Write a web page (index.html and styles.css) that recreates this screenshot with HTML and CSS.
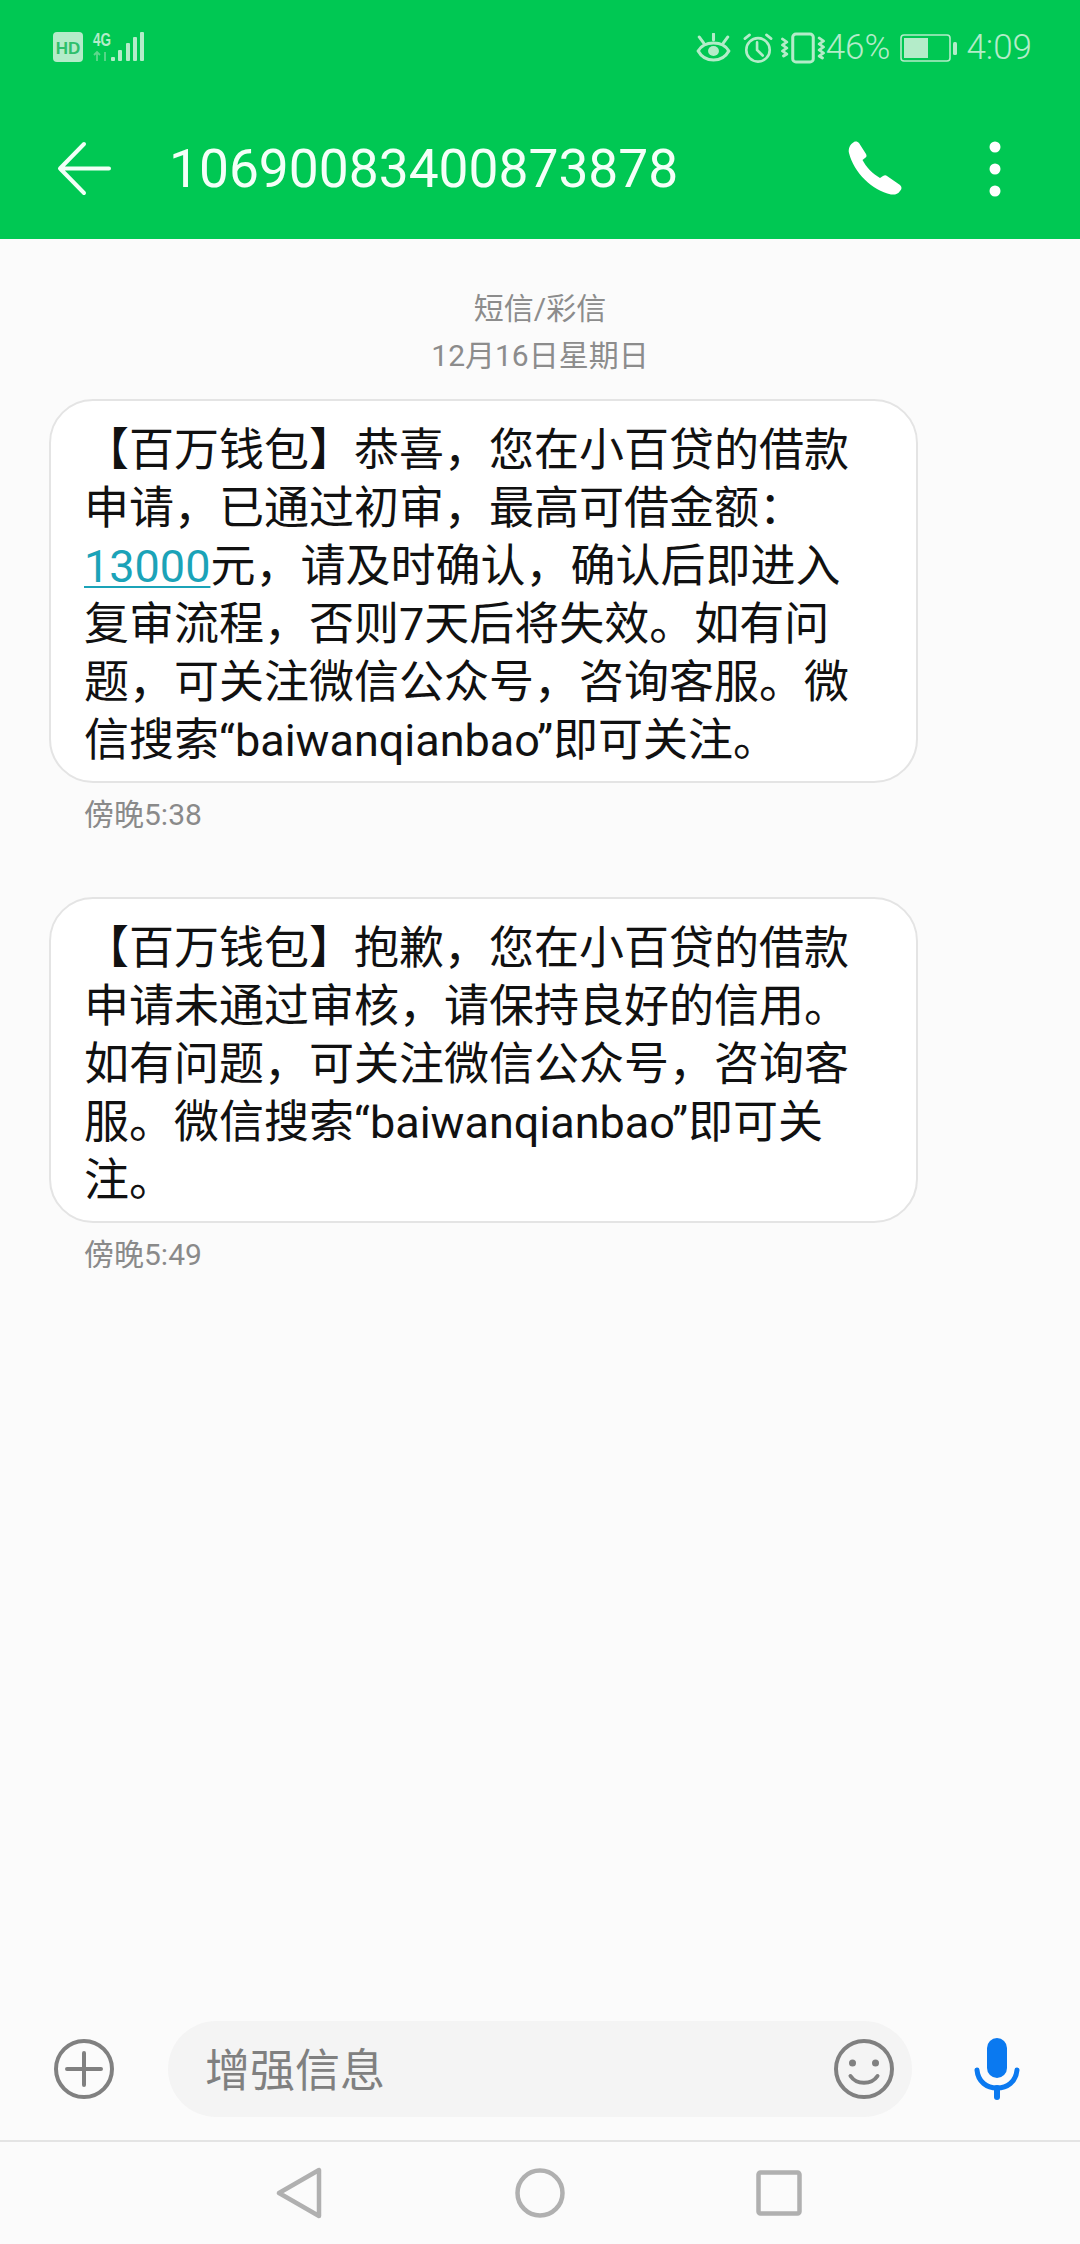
FILE: index.html
```html
<!DOCTYPE html>
<html lang="zh-CN">
<head>
<meta charset="utf-8">
<title>短信</title>
<link rel="stylesheet" href="styles.css">
</head>
<body>
<div class="app">
  <header class="top">
    <div class="status">
      <div class="status-left">
        <svg class="ic-hd" width="30" height="30" viewBox="0 0 30 30"><rect width="30" height="30" rx="4" fill="#b4ecc9"/><text x="15" y="22" class="hd-text">HD</text></svg>
        <svg class="ic-sig" width="51" height="30" viewBox="0 0 51 30"><text x="0" y="14" class="net-text" textLength="18" lengthAdjust="spacingAndGlyphs">4G</text><path d="M4 20v9M1 23l3-3 3 3M12 29v-9" stroke="#5fd78d" stroke-width="1.800" fill="none"/><g fill="#b4ecc9"><rect x="18" y="25" width="4" height="4" rx="1"/><rect x="25" y="18" width="4" height="11" rx="1"/><rect x="33" y="11" width="4" height="18" rx="1"/><rect x="40" y="5" width="4" height="24" rx="1"/><rect x="47" y="0" width="4" height="29" rx="1"/></g></svg>
      </div>
      <div class="status-right">
        <svg width="35" height="30" viewBox="0 0 32 30" preserveAspectRatio="none" fill="none" stroke="#b4ecc9" stroke-width="2.800" stroke-linecap="round"><path d="M2 18c3-6 8-8 14-8s11 2 14 8c-3 6-8 9-14 9S5 24 2 18z"/><circle cx="16" cy="18" r="5" fill="#b4ecc9" stroke="none"/><path d="M3 4l4 6M16 1v6M29 4l-4 6"/></svg>
        <svg class="ic-alarm" width="30" height="30" viewBox="0 0 32 32" fill="none" stroke="#b4ecc9" stroke-width="2.800" stroke-linecap="round"><circle cx="16" cy="18" r="12.500"/><path d="M15 10v8l6 6M2 6l5-4M30 6l-5-4"/></svg>
        <svg class="ic-vib" width="42" height="32" viewBox="0 0 42 32" fill="none" stroke="#b4ecc9" stroke-width="2.800" stroke-linejoin="round" stroke-linecap="round"><rect x="11.500" y="2" width="19" height="28" rx="3"/><path d="M2 7l4 3-4 3 4 3-4 3 4 3-3 2M36 6l4 3-4 3 4 3-4 3 4 3-4 3 3 2"/></svg>
        <span class="status-text pct">46%</span>
        <svg class="ic-bat" width="58" height="28" viewBox="0 0 58 28"><rect x="1" y="1" width="49" height="26" rx="3" fill="none" stroke="#b4ecc9" stroke-width="1.600"/><rect x="4" y="4" width="24" height="20" fill="#b4ecc9"/><rect x="53" y="8" width="4" height="13" rx="1.500" fill="#b4ecc9"/></svg>
        <span class="status-text">4:09</span>
      </div>
    </div>
    <div class="toolbar">
      <svg class="ic-back" width="54" height="56" viewBox="0 0 54 56" fill="none" stroke="#f2fff7" stroke-width="4" stroke-linecap="round" stroke-linejoin="round"><path d="M27 3L3 27.500l24 24.500M3 27.500h49"/></svg>
      <h1 class="title">10690083400873878</h1>
      <svg class="ic-phone" width="56" height="56" viewBox="0 0 56 56"><path d="M6 1C8 0 10 1 11 2L18 13C19 15 18.500 16 17 17L14.500 19C18 26 25 33 32 37L35 35C36.500 34 38 34 39 35L52 44C54 46 54 48 52 50C50 53 47 54 43 53.500C24 49 6 32 1 12C0 8 2 3 6 1Z" fill="#fff"/></svg>
      <svg class="ic-more" width="14" height="56" viewBox="0 0 14 56" fill="#fff"><circle cx="7" cy="6" r="5.500"/><circle cx="7" cy="28" r="5.500"/><circle cx="7" cy="50" r="5.500"/></svg>
    </div>
  </header>

  <main class="thread">
    <div class="day">
      <div>短信/彩信</div>
      <div>12月16日星期日</div>
    </div>
    <article class="msg">
      <p class="bubble">【百万钱包】恭喜，您在小百贷的借款<br>申请，已通过初审，最高可借金额：<br><span class="link">13000</span>元，请及时确认，确认后即进入<br>复审流程，否则7天后将失效。如有问<br>题，可关注微信公众号，咨询客服。微<br>信搜索“baiwanqianbao”即可关注。</p>
      <time class="time">傍晚5:38</time>
    </article>
    <article class="msg">
      <p class="bubble">【百万钱包】抱歉，您在小百贷的借款<br>申请未通过审核，请保持良好的信用。<br>如有问题，可关注微信公众号，咨询客<br>服。微信搜索“baiwanqianbao”即可关<br>注。</p>
      <time class="time">傍晚5:49</time>
    </article>
  </main>

  <div class="composer">
    <svg width="60" height="60" viewBox="0 0 60 60" fill="none" stroke="#808080" stroke-width="4" stroke-linecap="round"><circle cx="30" cy="30" r="28"/><path d="M30 14v32M13 30h34"/></svg>
    <div class="input">
      <span class="placeholder">增强信息</span>
      <svg width="60" height="60" viewBox="0 0 60 60" fill="none" stroke="#808080" stroke-width="4" stroke-linecap="round"><circle cx="30" cy="30" r="28"/><circle cx="18.500" cy="24" r="3.500" fill="#808080" stroke="none"/><circle cx="41.500" cy="24" r="3.500" fill="#808080" stroke="none"/><path d="M16.500 37c6 9 21 9 27 0"/></svg>
    </div>
    <svg class="ic-mic" width="46" height="62" viewBox="0 0 46 62" fill="none" stroke="#0a79f0" stroke-linecap="round"><rect x="13" y="0" width="20" height="40" rx="10" fill="#0a79f0" stroke="none"/><path d="M3 32c1 12 10 18 20 18s19-6 20-18" stroke-width="5"/><path d="M23 50v9" stroke-width="6"/></svg>
  </div>

  <nav class="navbar">
    <svg width="46" height="52" viewBox="0 0 46 52" fill="none" stroke="#b0b0b0" stroke-width="4.500" stroke-linejoin="round"><path d="M43 3v46L3 26z"/></svg>
    <svg width="50" height="50" viewBox="0 0 50 50" fill="none" stroke="#b0b0b0" stroke-width="4.500"><circle cx="25" cy="25" r="22.500"/></svg>
    <svg width="46" height="46" viewBox="0 0 46 46" fill="none" stroke="#b0b0b0" stroke-width="4.500" stroke-linejoin="round"><rect x="2.500" y="2.500" width="41" height="41" rx="2"/></svg>
  </nav>
</div>
</body>
</html>
```
FILE: styles.css
```css
* { box-sizing: border-box; }
html, body { margin: 0; padding: 0; }
body {
  width: 1080px;
  height: 2244px;
  background: #fbfbfb;
  font-family: Roboto, "Noto Sans CJK SC", sans-serif;
  overflow: hidden;
}
.app { display: flex; flex-direction: column; height: 2244px; }

.top { background: #00c853; height: 239px; flex: none; }
.status {
  height: 96px;
  padding: 32px 48px 0 53px;
  display: flex;
  justify-content: space-between;
  align-items: flex-start;
}
.status-left { display: flex; gap: 10px; align-items: flex-start; }
.status-left svg { overflow: visible; }
.status-right { display: flex; align-items: center; gap: 8px; height: 32px; }
.status-text { color: #b4ecc9; font-size: 35px; font-weight: 300; line-height: 32px; }
.pct { margin-left: -6px; }
.ic-alarm { margin-left: 4px; }
.ic-vib { margin-left: 1px; transform: scaleX(1.08); }
.ic-bat { margin: 0 0 0 2px; }
.hd-text { font: 700 17px "Liberation Sans", sans-serif; fill: #2fbf6c; text-anchor: middle; }
.net-text { font: 700 19px "Liberation Sans", sans-serif; fill: #b4ecc9; }

.toolbar {
  height: 143px;
  padding: 2px 78px 0 57px;
  display: flex;
  align-items: center;
}
.ic-back { flex: none; }
.title {
  margin: 0 0 0 58px;
  font-size: 53.300px;
  font-weight: 400;
  color: #f4fff8;
  flex: 1;
  white-space: nowrap;
}
.ic-phone { flex: none; margin-right: 84px; }
.ic-more { flex: none; }

.thread { flex: 1; padding: 46px 162px 0 49px; }
.day {
  margin-left: -49px;
  margin-right: -162px;
  text-align: center;
  font-size: 30px;
  line-height: 47px;
  color: #8c8c8c;
}
.msg { margin: 20px 0 62px; }
.msg + .msg { margin-top: 0; }
.bubble {
  margin: 0;
  padding: 21px 20px 11px 33px;
  background: #fff;
  border: 2px solid #e4e4e4;
  border-radius: 44px;
  font-size: 45px;
  line-height: 58px;
  color: #111;
  white-space: nowrap;
}
.link { color: #1ba3b8; text-decoration: underline; text-underline-offset: 4px; text-decoration-thickness: 2px; }
.time {
  display: block;
  padding-left: 35px;
  margin-top: 12px;
  font-size: 30px;
  line-height: 40px;
  color: #8a8a8a;
}

.composer {
  flex: none;
  height: 140px;
  padding: 0 0 3px 54px;
  display: flex;
  align-items: center;
}
.input {
  width: 744px;
  height: 96px;
  margin-left: 54px;
  padding: 0 18px 0 37px;
  background: #f4f4f4;
  border-radius: 48px;
  display: flex;
  align-items: center;
  justify-content: space-between;
}
.placeholder { font-size: 45px; color: #808080; padding-bottom: 2px; }
.ic-mic { margin-left: 62px; }

.navbar {
  flex: none;
  height: 104px;
  border-top: 2px solid #e4e4e4;
  padding-left: 276px;
  display: flex;
  align-items: center;
}
.navbar svg:nth-child(2) { margin-left: 193px; }
.navbar svg:nth-child(3) { margin-left: 191px; }
```
